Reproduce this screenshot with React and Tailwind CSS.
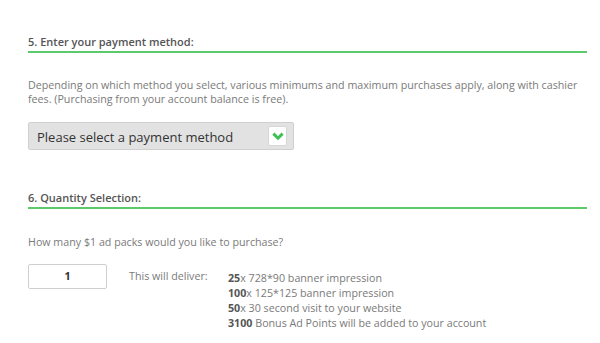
import React from 'react';

const deliveries = [
  { qty: '25', sep: 'x', text: ' 728*90 banner impression' },
  { qty: '100', sep: 'x', text: ' 125*125 banner impression' },
  { qty: '50', sep: 'x', text: ' 30 second visit to your website' },
  { qty: '3100', sep: '', text: ' Bonus Ad Points will be added to your account' },
];

const SectionHeading = ({ children, className = '' }) => (
  <h2
    className={`w-[559px] border-b-2 border-[#5cc96a] pb-[2px] text-[11px] leading-[14px] font-semibold text-[#555] ${className}`}
  >
    {children}
  </h2>
);

const App = () => {
  return (
    <div className="w-[600px] h-[343px] overflow-hidden bg-white px-[28px] pt-[35px] font-['Open_Sans',sans-serif]">
      <SectionHeading>5. Enter your payment method:</SectionHeading>

      <p className="mt-[25px] w-[559px] text-[10.7px] leading-[14px] text-[#7a7a7a]">
        Depending on which method you select, various minimums and maximum purchases apply, along with cashier
        fees. (Purchasing from your account balance is free).
      </p>

      <div className="mt-[16px] flex h-[28px] w-[266px] items-center justify-between rounded-[2px] border border-[#cfcfcf] bg-[#e2e2e2] pl-[8px] pr-[6px]">
        <span className="pt-[3px] text-[13px] leading-none text-[#333]">Please select a payment method</span>
        <span className="flex h-[20px] w-[19px] items-center justify-center rounded-[2px] border border-[#d6d6d6] bg-white">
          <svg width="12" height="9" viewBox="0 0 12 9" fill="none">
            <path d="M1.4 1.6 L6 6.2 L10.6 1.6" stroke="#3cc157" strokeWidth="3" />
          </svg>
        </span>
      </div>

      <SectionHeading className="mt-[41px]">6. Quantity Selection:</SectionHeading>

      <p className="mt-[26px] text-[10.7px] leading-[14px] text-[#7a7a7a]">
        How many $1 ad packs would you like to purchase?
      </p>

      <div className="mt-[15px] flex items-start">
        <div className="flex h-[25px] w-[79px] items-center justify-center rounded-[2px] border border-[#cfcfcf] bg-white text-[10.7px] font-bold text-[#333]">
          1
        </div>
        <div className="ml-[22px] mt-[5px] w-[99px] text-[10.7px] leading-[15px] text-[#7a7a7a]">
          This will deliver:
        </div>
        <ul className="mt-[7px] text-[10.7px] leading-[15px] text-[#7a7a7a]">
          {deliveries.map((d) => (
            <li key={d.qty}>
              <span className="font-bold text-[#555]">{d.qty}</span>
              {d.sep}
              {d.text}
            </li>
          ))}
        </ul>
      </div>
    </div>
  );
};

export default App;
